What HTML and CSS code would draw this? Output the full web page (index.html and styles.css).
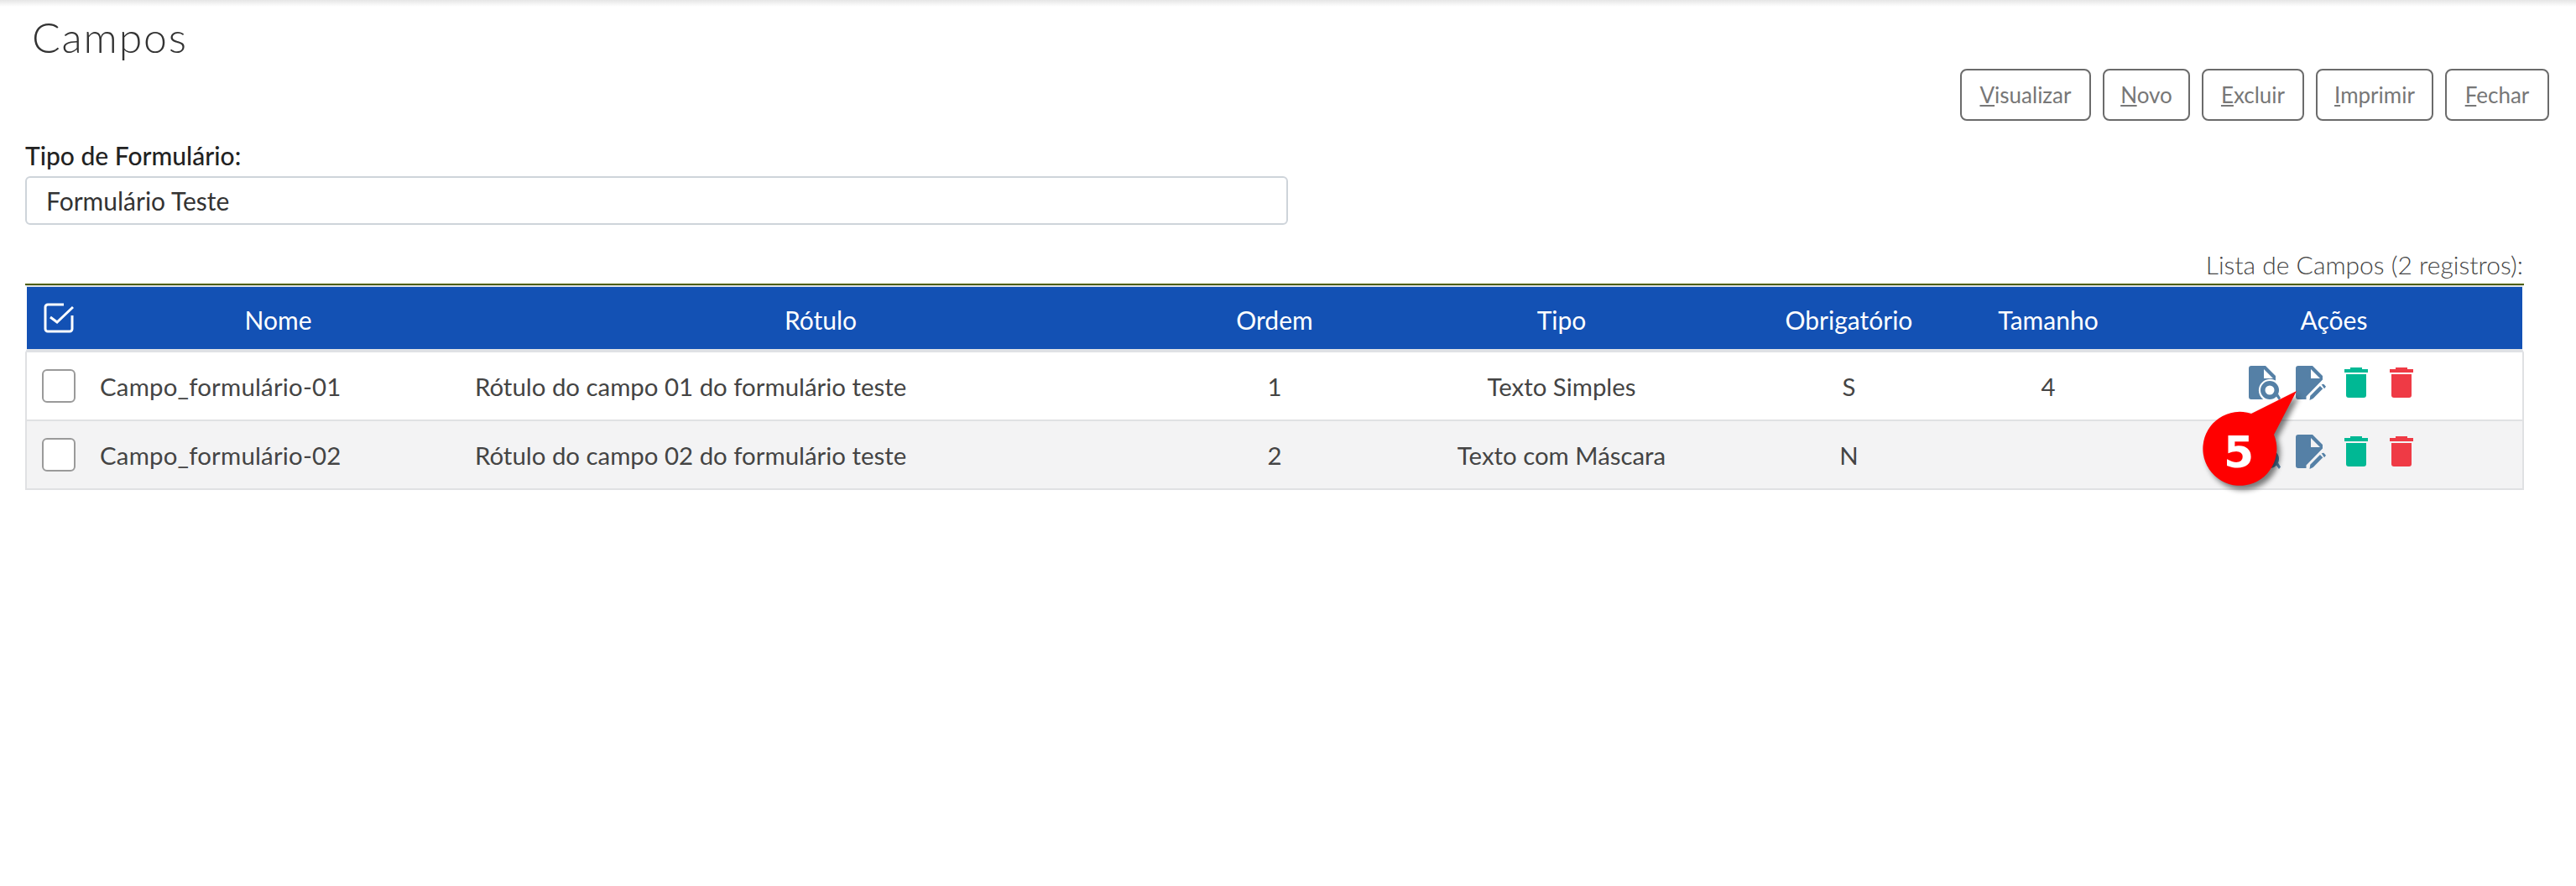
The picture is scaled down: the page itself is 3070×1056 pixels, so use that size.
FILE: index.html
```html
<!DOCTYPE html>
<html lang="pt-BR">
<head>
<meta charset="utf-8">
<title>Campos</title>
<link rel="stylesheet" href="styles.css">
</head>
<body>
<svg class="defs" width="0" height="0" aria-hidden="true">
  <defs>
    <symbol id="i-view" viewBox="0 0 38 41">
      <path fill-rule="evenodd" d="M3 0H20L32 12V17.500A13.500 13.500 0 0 0 17.200 40H3A3 3 0 0 1 0 37V3A3 3 0 0 1 3 0ZM18 4V15H29Z"/>
      <path fill-rule="evenodd" d="M25 18A11 11 0 1 0 25 40A11 11 0 1 0 25 18ZM25 23.500A5.500 5.500 0 1 1 25 34.500A5.500 5.500 0 1 1 25 23.500Z"/>
      <path d="M32.500 36L35 33.500L38 38.500L36 41Z"/>
    </symbol>
    <symbol id="i-edit" viewBox="0 0 36 41">
      <path fill-rule="evenodd" d="M3 0H20L32 12V16.500L12.500 36.500V40H3A3 3 0 0 1 0 37V3A3 3 0 0 1 3 0ZM18 4V15H29Z"/>
      <path d="M29 24L32.300 27.300L20.700 39L16.500 41L17.300 35.700Z"/>
      <path d="M30.700 22.300L33.300 21.700L36 24.700L34 27.300Z"/>
    </symbol>
    <symbol id="i-trash" viewBox="0 0 28 36">
      <path d="M0 2H7V0H21V2H28V6H0Z"/>
      <path d="M2 8H26V33A3 3 0 0 1 23 36H5A3 3 0 0 1 2 33Z"/>
    </symbol>
  </defs>
</svg>
<header class="top-bar"></header>
<main class="page">
  <h1 class="title">Campos</h1>
  <div class="actions">
    <button class="btn"><u>V</u>isualizar</button>
    <button class="btn"><u>N</u>ovo</button>
    <button class="btn"><u>E</u>xcluir</button>
    <button class="btn"><u>I</u>mprimir</button>
    <button class="btn"><u>F</u>echar</button>
  </div>
  <label class="field-label" for="tipo">Tipo de Formulário:</label>
  <input class="field" id="tipo" value="Formulário Teste" readonly>
  <p class="caption">Lista de Campos (2 registros):</p>
  <div class="table-wrap">
    <table class="grid">
      <colgroup>
        <col class="c-check"><col class="c-nome"><col class="c-rotulo"><col class="c-ordem"><col class="c-tipo"><col class="c-obrig"><col class="c-tam"><col class="c-acoes">
      </colgroup>
      <thead>
        <tr>
          <th>
            <svg class="head-check" viewBox="0 0 36 36" width="36" height="36"><path d="M24 2H5A3 3 0 0 0 2 5V31A3 3 0 0 0 5 34H31A3 3 0 0 0 34 31V15" fill="none" stroke="#fff" stroke-width="3"/><path d="M8 17L16 23L35 5" fill="none" stroke="#fff" stroke-width="3"/></svg>
          </th>
          <th>Nome</th><th>Rótulo</th><th>Ordem</th><th>Tipo</th><th>Obrigatório</th><th>Tamanho</th><th>Ações</th>
        </tr>
      </thead>
      <tbody>
        <tr>
          <td><span class="box"></span></td>
          <td class="left nome">Campo_formulário-01</td>
          <td class="left rot">Rótulo do campo 01 do formulário teste</td>
          <td>1</td><td>Texto Simples</td><td>S</td><td>4</td>
          <td>
            <div class="row-icons">
              <svg class="ic blue w38"><use href="#i-view"/></svg>
              <svg class="ic blue w36"><use href="#i-edit"/></svg>
              <svg class="ic green tr"><use href="#i-trash"/></svg>
              <svg class="ic red tr"><use href="#i-trash"/></svg>
            </div>
          </td>
        </tr>
        <tr class="alt">
          <td><span class="box"></span></td>
          <td class="left nome">Campo_formulário-02</td>
          <td class="left rot">Rótulo do campo 02 do formulário teste</td>
          <td>2</td><td>Texto com Máscara</td><td>N</td><td></td>
          <td>
            <div class="row-icons">
              <svg class="ic blue w38"><use href="#i-view"/></svg>
              <svg class="ic blue w36"><use href="#i-edit"/></svg>
              <svg class="ic green tr"><use href="#i-trash"/></svg>
              <svg class="ic red tr"><use href="#i-trash"/></svg>
            </div>
          </td>
        </tr>
      </tbody>
    </table>
  </div>
</main>
<div class="callout">
  <svg viewBox="0 0 170 160" width="170" height="160">
    <path class="callout-shadow" d="M143 33L116 85A44 44 0 1 1 89 60Z"/>
    <path class="callout-shape" d="M143 33L116 85A44 44 0 1 1 89 60Z"/>
  </svg>
  <span class="callout-num">5</span>
</div>
</body>
</html>
```
FILE: styles.css
```css
* { box-sizing: border-box; }
html, body { margin: 0; padding: 0; background: #fff; }
body { font-family: "Lato", "Open Sans", sans-serif; color: #333; height: 1056px; overflow: hidden; position: relative; }
.defs { display: block; height: 0; }
.top-bar { height: 8px; background: linear-gradient(#e6e6e6, #fff); }
.page { padding: 0 32px 0 30px; display: flow-root; }
.title { margin: 8px 0 0 8px; font-size: 50px; line-height: 56px; font-weight: 300; letter-spacing: 1.800px; color: #333; }
.actions { display: flex; justify-content: flex-end; gap: 14px; margin: 10px 0 0; }
.btn { height: 62px; padding: 0; background: #fff; border: 2px solid #6b6b6b; border-radius: 8px; color: #777; font: 400 26px "Lato", sans-serif; }
.btn:nth-child(1) { width: 156px; }
.btn:nth-child(2) { width: 104px; }
.btn:nth-child(3) { width: 122px; }
.btn:nth-child(4) { width: 140px; }
.btn:nth-child(5) { width: 124px; }
.field-label { display: block; margin-top: 23px; font-size: 30px; line-height: 36px; font-weight: 500; color: #222; }
.field { display: block; width: 1505px; height: 58px; margin-top: 7px; padding: 0 23px; border: 2px solid #ced4da; border-radius: 6px; font: 400 30px "Lato", sans-serif; color: #333; outline: none; }
.caption { margin: 29px 0 0; padding-right: 1px; text-align: right; font-size: 30px; line-height: 36px; font-weight: 300; color: #444; width: 2978px; }
.table-wrap { width: 2978px; margin-top: 5px; border-top: 2px solid #4d5f00; }
.grid { width: 100%; border-collapse: separate; border-spacing: 0; table-layout: fixed; font-size: 29.400px; color: #444; }
.c-check { width: 75px; } .c-nome { width: 453px; } .c-rotulo { width: 840px; } .c-ordem { width: 242px; } .c-tipo { width: 442px; } .c-obrig { width: 243px; } .c-tam { width: 232px; } .c-acoes { width: 451px; }
.grid th { height: 80px; background: #1351b4; border-top: 2px solid #dde2e8; border-bottom: 4px solid #dfe1e5; color: #fff; font-size: 30px; font-weight: 400; text-align: center; padding: 3px 0 0; }
.grid th:first-child { border-left: 2px solid #fff; padding: 0; }
.grid th:last-child { border-right: 2px solid #fff; }
.head-check { display: block; margin: 0 0 0 20px; }
.grid td { height: 82px; padding: 0; text-align: center; border-bottom: 2px solid #e0e1e3; background: #fff; }
.grid td:first-child { border-left: 2px solid #e0e1e3; }
.grid td:last-child { border-right: 2px solid #e0e1e3; }
.grid .alt td { background: #f3f3f4; }
.grid td.nome { text-align: left; padding-left: 14px; letter-spacing: .2px; }
.grid td.rot { text-align: left; padding-left: 8px; }
.box { display: block; width: 40px; height: 40px; margin-left: 18px; background: #fff; border: 2px solid #9a9a9a; border-radius: 6px; }
.row-icons { display: flex; align-items: center; padding-left: 123px; height: 46px; margin-top: -8px; }
.ic { display: block; fill: currentColor; }
.blue { color: #5580a6; }
.green { color: #00b894; }
.red { color: #ef3a45; }
.w38 { width: 38px; height: 41px; margin-right: 18px; }
.w36 { width: 36px; height: 41px; margin-right: 22px; }
.tr { width: 28px; height: 36px; margin-right: 26px; }
.callout { position: absolute; left: 2594px; top: 433px; width: 170px; height: 160px; }
.callout svg { display: block; overflow: visible; }
.callout-shape { fill: #ff0000; }
.callout-shadow { fill: #000; opacity: .5; transform: translate(4px, 5px); filter: blur(3px); }
.callout-num { position: absolute; left: 56px; top: 75px; font: 700 52px/62px "DejaVu Sans", sans-serif; color: #fff; }
```
